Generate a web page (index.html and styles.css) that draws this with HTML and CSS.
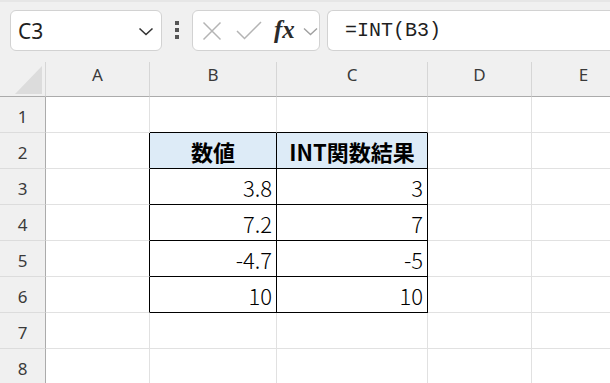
FILE: index.html
```html
<!DOCTYPE html>
<html lang="ja">
<head>
  <meta charset="UTF-8">
  <title>INT関数</title>
  <link rel="stylesheet" href="styles.css">
</head>
<body>
  <header class="toolbar">
    <div class="name-box">
      <span class="name-value">C3</span>
      <svg class="chev" width="16" height="9" viewBox="0 0 16 9"><path d="M1.5 1.5 L8 7.5 L14.5 1.5" fill="none" stroke="#333" stroke-width="1.6"/></svg>
    </div>
    <div class="grip"><i></i><i></i><i></i></div>
    <div class="fx-box">
      <svg class="icon" width="20" height="20" viewBox="0 0 20 20"><path d="M1.5 1.5 L18.5 18.5 M18.5 1.5 L1.5 18.5" fill="none" stroke="#b4b4b4" stroke-width="1.5"/></svg>
      <svg class="icon" width="26" height="20" viewBox="0 0 26 20"><path d="M1 10 L8.5 17.5 L25 1" fill="none" stroke="#b4b4b4" stroke-width="1.5"/></svg>
      <span class="fx">fx</span>
      <svg class="chev-sm" width="15" height="9" viewBox="0 0 15 9"><path d="M1 1.5 L7.5 7.5 L14 1.5" fill="none" stroke="#a0a0a0" stroke-width="1.4"/></svg>
    </div>
    <div class="formula">=INT(B3)</div>
  </header>

  <div class="sheet">
    <div class="corner"><span class="tri"></span></div>
    <div class="col-head">A</div>
    <div class="col-head">B</div>
    <div class="col-head">C</div>
    <div class="col-head">D</div>
    <div class="col-head">E</div>

    <div class="row-head">1</div>
    <div class="cell"></div>
    <div class="cell edge-b"></div>
    <div class="cell edge-b"></div>
    <div class="cell"></div>
    <div class="cell"></div>

    <div class="row-head">2</div>
    <div class="cell edge-r"></div>
    <div class="cell boxed title">数値</div>
    <div class="cell boxed title">INT関数結果</div>
    <div class="cell"></div>
    <div class="cell"></div>

    <div class="row-head">3</div>
    <div class="cell edge-r"></div>
    <div class="cell boxed num">3.8</div>
    <div class="cell boxed num">3</div>
    <div class="cell"></div>
    <div class="cell"></div>

    <div class="row-head">4</div>
    <div class="cell edge-r"></div>
    <div class="cell boxed num">7.2</div>
    <div class="cell boxed num">7</div>
    <div class="cell"></div>
    <div class="cell"></div>

    <div class="row-head">5</div>
    <div class="cell edge-r"></div>
    <div class="cell boxed num">-4.7</div>
    <div class="cell boxed num">-5</div>
    <div class="cell"></div>
    <div class="cell"></div>

    <div class="row-head">6</div>
    <div class="cell edge-r"></div>
    <div class="cell boxed num">10</div>
    <div class="cell boxed num">10</div>
    <div class="cell"></div>
    <div class="cell"></div>

    <div class="row-head">7</div>
    <div class="cell"></div>
    <div class="cell"></div>
    <div class="cell"></div>
    <div class="cell"></div>
    <div class="cell"></div>

    <div class="row-head">8</div>
    <div class="cell"></div>
    <div class="cell"></div>
    <div class="cell"></div>
    <div class="cell"></div>
    <div class="cell"></div>
  </div>
</body>
</html>
```

FILE: styles.css
```css
:root {
  --chrome-bg: #f0f0f0;
  --grid-line: #e1e1e1;
  --head-line: #d6d6d6;
  --head-edge: #ababab;
  --box-line: #d2d2d2;
}

* {
  box-sizing: border-box;
}

body {
  margin: 0;
  width: 610px;
  height: 383px;
  overflow: hidden;
  background: #fff;
  font-family: "Noto Sans", "Open Sans", sans-serif;
}

/* Toolbar */
.toolbar {
  display: flex;
  align-items: flex-start;
  height: 62px;
  padding: 8px 0 0 10px;
  background: var(--chrome-bg);
  border-top: 2px solid #e6e6e6;
}

.name-box,
.fx-box,
.formula {
  height: 41px;
  background: #fff;
  border: 1px solid var(--box-line);
  border-radius: 6px;
  display: flex;
  align-items: center;
}

.name-box {
  width: 152px;
  padding: 0 7px 0 7px;
  justify-content: space-between;
}

.name-value {
  font-size: 21px;
  color: #1f1f1f;
  padding-top: 1px;
}

.chev {
  margin-top: 2px;
}

.grip {
  width: 30px;
  height: 41px;
  display: flex;
  flex-direction: column;
  align-items: center;
  justify-content: center;
  gap: 3px;
  padding-bottom: 2px;
}

.grip i {
  display: block;
  width: 4px;
  height: 4px;
  background: #555;
}

.fx-box {
  width: 128px;
  padding-left: 9px;
}

.fx-box .icon:nth-child(2) {
  margin-left: 14px;
}

.fx {
  font-family: "Liberation Serif", "DejaVu Serif", serif;
  font-style: italic;
  font-weight: bold;
  font-size: 25px;
  color: #2a2a2a;
  margin-left: 12px;
  margin-top: -2px;
}

.chev-sm {
  margin-left: 8px;
  margin-top: 2px;
}

.formula {
  flex: 1;
  margin-left: 7px;
  border-right: none;
  border-radius: 6px 0 0 6px;
  padding-left: 17px;
  font-family: "Liberation Mono", "DejaVu Sans Mono", monospace;
  font-size: 20px;
  color: #1f1f1f;
}

/* Sheet grid */
.sheet {
  display: grid;
  grid-template-columns: 46px 104px 127px 151px 104px 104px;
  grid-template-rows: 35px repeat(8, 36px);
}

.corner,
.col-head,
.row-head,
.cell {
  border-right: 1px solid var(--grid-line);
  border-bottom: 1px solid var(--grid-line);
}

.corner {
  background: var(--chrome-bg);
  border-right-color: var(--head-line);
  border-bottom-color: var(--head-edge);
  display: flex;
  align-items: flex-end;
  justify-content: flex-end;
  padding: 0 3px 2px 0;
}

.tri {
  width: 27px;
  height: 28px;
  background: #dcdcdc;
  clip-path: polygon(100% 0, 100% 100%, 0 100%);
}

.col-head {
  background: var(--chrome-bg);
  border-right-color: var(--head-line);
  border-bottom-color: var(--head-edge);
  display: flex;
  align-items: center;
  justify-content: center;
  padding-bottom: 10px;
  font-size: 17px;
  color: #3a3a3a;
}

.row-head {
  background: var(--chrome-bg);
  border-right-color: var(--head-edge);
  border-bottom-color: #dcdcdc;
  display: flex;
  align-items: center;
  justify-content: center;
  padding-top: 3px;
  font-size: 17px;
  color: #3a3a3a;
}

.cell {
  display: flex;
  align-items: center;
  font-family: "Noto Sans CJK JP", "Noto Sans", sans-serif;
  font-size: 22px;
  color: #000;
}

.cell.edge-r,
.cell.boxed {
  border-right-color: #000;
}

.cell.edge-b,
.cell.boxed {
  border-bottom-color: #000;
}

.title {
  background: #ddebf7;
  justify-content: center;
  font-weight: bold;
}

.num {
  justify-content: flex-end;
  padding-right: 4px;
  font-weight: 300;
}
```
